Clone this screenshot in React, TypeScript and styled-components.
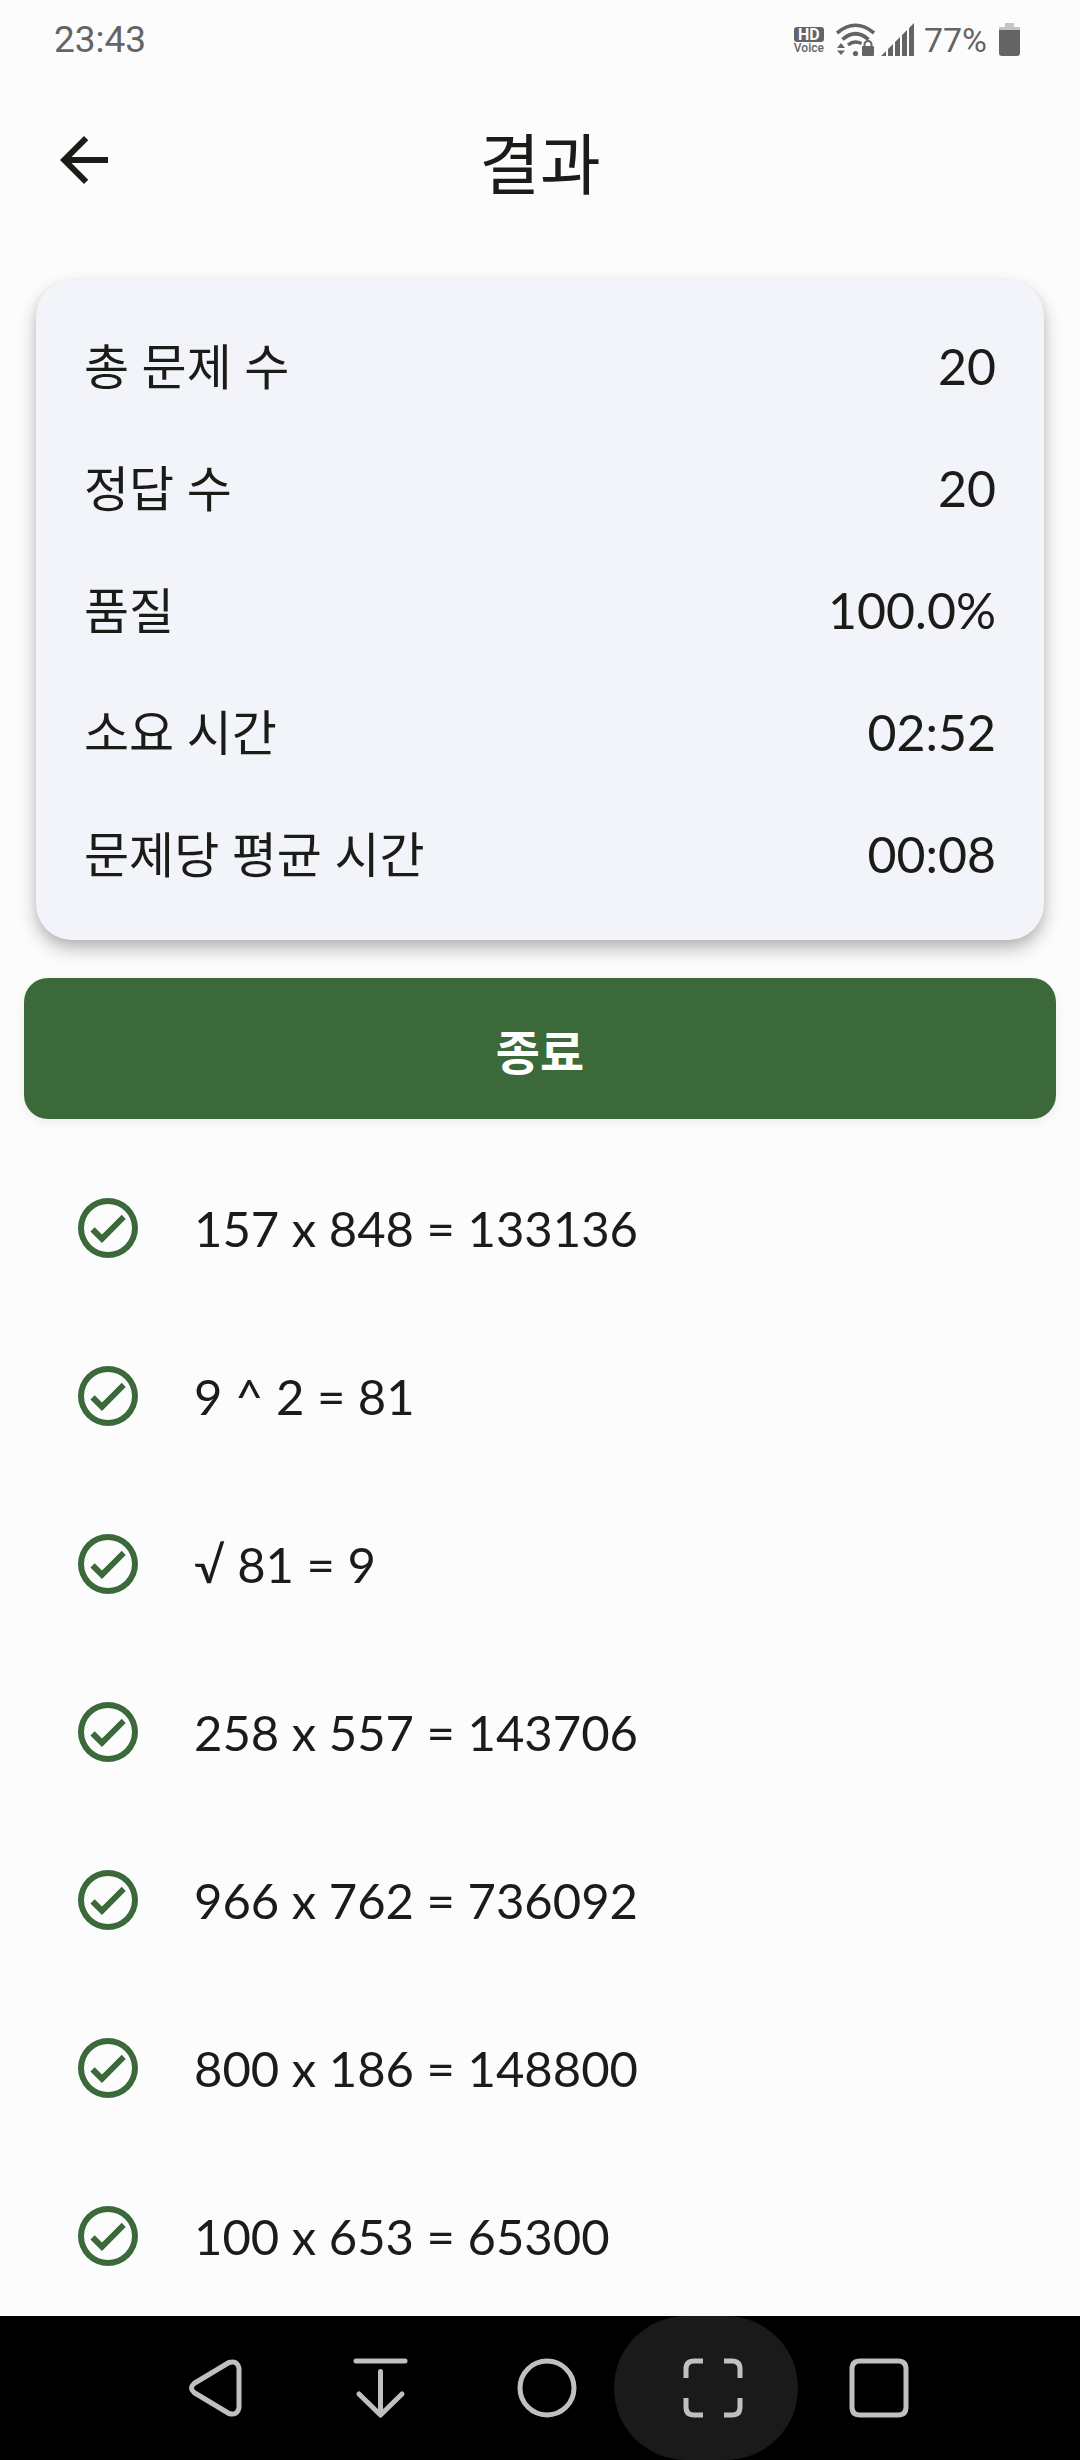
import React from 'react';
import styled, { createGlobalStyle } from 'styled-components';

const INK = '#1a1c18';
const GREEN = '#3b6939';
const STATUS = '#646464';
const NAV = '#c0c0c0';

const GlobalStyle = createGlobalStyle`
  *, *::before, *::after { box-sizing: border-box; }
  body {
    margin: 0;
    background: #fcfcfc;
    color: ${INK};
    font-family: Lato, "Noto Sans CJK KR", sans-serif;
  }
  button { font: inherit; border: 0; padding: 0; background: none; cursor: pointer; }
  svg { display: block; flex: none; }
`;

const Screen = styled.div`
  display: grid;
  grid-template-rows: auto auto minmax(0, 1fr) auto;
  height: 100vh;
`;

const StatusBar = styled.div`
  display: flex;
  justify-content: space-between;
  align-items: center;
  height: 80px;
  padding: 0 60px 0 54px;
  color: ${STATUS};
  font-family: Roboto, sans-serif;
`;

const Clock = styled.time`
  font-size: 37px;
  line-height: 40px;
`;

const StatusIcons = styled.div`
  display: flex;
  align-items: center;
`;

const VoiceBadge = styled.div`
  display: flex;
  flex-direction: column;
  align-items: center;
  width: 30px;
  margin-right: 12px;
  padding-top: 1px;
  font-size: 12px;
  font-weight: 500;
  line-height: 13px;
`;

const HdTag = styled.span`
  width: 30px;
  border-radius: 3px;
  background: ${STATUS};
  color: #fcfcfc;
  font-size: 16px;
  font-weight: 700;
  line-height: 15px;
  text-align: center;
`;

const Signals = styled.div`
  display: flex;
  gap: 5px;
`;

const BatteryText = styled.span`
  margin: 0 12px 0 9px;
  font-size: 34px;
  line-height: 40px;
`;

const TopBar = styled.header`
  display: grid;
  grid-template-columns: 72px 1fr 72px;
  align-items: center;
  height: 160px;
  padding: 0 48px;
`;

const IconButton = styled.button`
  width: 72px;
  height: 72px;
  color: ${INK};
`;

const Title = styled.h1`
  margin: 0;
  padding-top: 8px;
  font-size: 66px;
  font-weight: 400;
  line-height: 84px;
  text-align: center;
`;

const Content = styled.main`
  overflow-y: auto;
  scrollbar-width: none;
  padding-top: 40px;
`;

const Card = styled.dl`
  margin: 0 36px 38px;
  padding: 25px 48px;
  border-radius: 36px;
  background: #f3f4f9;
  box-shadow: 0 9px 18px rgba(0, 0, 0, 0.26), 0 3px 9px rgba(0, 0, 0, 0.06);
`;

const StatRow = styled.div`
  display: flex;
  justify-content: space-between;
  align-items: center;
  height: 122px;
  font-size: 49px;
  line-height: 72px;
`;

const StatLabel = styled.dt`
  margin: 0;
`;

const StatValue = styled.dd`
  margin: 0;
  font-size: 50px;
`;

const FinishWrap = styled.div`
  padding: 0 24px;
`;

const FinishButton = styled.button`
  && {
    display: block;
    width: 100%;
    height: 141px;
    padding-top: 6px;
    border-radius: 24px;
    background: ${GREEN};
    color: #fff;
    font-size: 48px;
    font-weight: 700;
    line-height: 72px;
    box-shadow: 0 4px 12px rgba(0, 0, 0, 0.06);
  }
`;

const ResultList = styled.ul`
  margin: 0;
  padding: 25px 72px 0;
  list-style: none;
`;

const ResultRow = styled.li`
  display: flex;
  align-items: center;
  gap: 50px;
  height: 168px;
  font-size: 49px;
  line-height: 72px;
`;

const NavBar = styled.nav`
  display: flex;
  justify-content: center;
  height: 144px;
  padding-left: 14px;
  background: #000;
  color: ${NAV};
`;

const NavButton = styled.button<{ $pressed?: boolean }>`
  position: relative;
  display: grid;
  place-items: center;
  width: 166px;
  height: 144px;
  color: inherit;

  &::before {
    content: '';
    display: ${(p) => (p.$pressed ? 'block' : 'none')};
    position: absolute;
    inset: 0 -2px 0 -16px;
    border-radius: 72px;
    background: #1a1a1a;
  }

  svg { position: relative; }
`;

const stats = [
  ['총 문제 수', '20'],
  ['정답 수', '20'],
  ['품질', '100.0%'],
  ['소요 시간', '02:52'],
  ['문제당 평균 시간', '00:08'],
];

const results = [
  '157 x 848 = 133136',
  '9 ^ 2 = 81',
  '√ 81 = 9',
  '258 x 557 = 143706',
  '966 x 762 = 736092',
  '800 x 186 = 148800',
  '100 x 653 = 65300',
];

const CheckIcon = () => (
  <svg width="72" height="72" viewBox="0 0 24 24" fill={GREEN} aria-label="정답" role="img">
    <path d="M12 2a10 10 0 1 0 0 20 10 10 0 0 0 0-20zm0 18a8 8 0 1 1 0-16 8 8 0 0 1 0 16z" />
    <path d="M16.59 7.58 10 14.17l-2.45-2.45L6.14 13.130 10 17l7.900-8z" />
  </svg>
);

const WifiIcon = () => (
  <svg width="40" height="34" viewBox="0 0 40 34" fill="none" stroke={STATUS}>
    <path d="M1 10Q19.500 -5.500 38 10" strokeWidth="3.600" />
    <path d="M6.500 16.500Q19.500 5 32.500 16.500" strokeWidth="3.600" />
    <path d="M12 22Q18 17 25.500 20.500" strokeWidth="3.400" />
    <circle cx="19.500" cy="30.500" r="2.600" fill={STATUS} stroke="none" />
    <path d="M5 20l4 5H1zM5 32l4-4.500H1z" fill={STATUS} stroke="none" />
    <rect x="26" y="23" width="12" height="10" rx="1" fill={STATUS} stroke="none" />
    <path d="M28.500 24v-2.500a3.500 3.500 0 0 1 7 0v2.500" strokeWidth="2" />
  </svg>
);

const SignalIcon = () => (
  <svg width="34" height="34" viewBox="0 0 34 34" fill={STATUS}>
    <path d="M0 33l5-5v5zM7 33v-7l5-5v12zM14 33V19l5-5v19zM21 33V12l5-5v26zM28 33V5l5-5v33z" />
  </svg>
);

const BatteryIcon = () => (
  <svg width="21" height="34" viewBox="0 0 21 34">
    <path d="M6 0h9v4h6v4H0V4h6z" fill="#c4c4c4" />
    <path d="M0 7h21v23a3 3 0 0 1-3 3H3a3 3 0 0 1-3-3z" fill={STATUS} />
  </svg>
);

const navIcons = [
  { label: '뒤로', d: 'M46 6.500 11 27.500Q6 32 11 36.500L46 57.500Q54 60 56 52V12Q54 4 46 6.500Z' },
  { label: '알림창', d: 'M7 5H56M31.500 15.500V58M10 38 31.500 59 53 38' },
  { label: '홈', d: 'M32 5a27 27 0 1 0 0 54 27 27 0 0 0 0-54Z' },
  { label: '화면 캡처', d: 'M22 5H13Q5 5 5 13V22M43 5H51Q59 5 59 13V22M5 42V51Q5 59 13 59H22M43 59H51Q59 59 59 51V42', pressed: true },
  { label: '최근 앱', d: 'M13 5H51Q59 5 59 13V51Q59 59 51 59H13Q5 59 5 51V13Q5 5 13 5Z' },
];

export default function App() {
  return (
    <Screen>
      <GlobalStyle />
      <StatusBar>
        <Clock>23:43</Clock>
        <StatusIcons>
          <VoiceBadge>
            <HdTag>HD</HdTag>
            <span>Voice</span>
          </VoiceBadge>
          <Signals>
            <WifiIcon />
            <SignalIcon />
          </Signals>
          <BatteryText>77%</BatteryText>
          <BatteryIcon />
        </StatusIcons>
      </StatusBar>
      <TopBar>
        <IconButton aria-label="뒤로">
          <svg width="72" height="72" viewBox="0 0 24 24" fill="currentColor">
            <path d="M20 11H7.830l5.590-5.590L12 4l-8 8 8 8 1.410-1.410L7.830 13H20z" />
          </svg>
        </IconButton>
        <Title>결과</Title>
      </TopBar>
      <Content>
        <Card>
          {stats.map(([label, value]) => (
            <StatRow key={label}>
              <StatLabel>{label}</StatLabel>
              <StatValue>{value}</StatValue>
            </StatRow>
          ))}
        </Card>
        <FinishWrap>
          <FinishButton>종료</FinishButton>
        </FinishWrap>
        <ResultList>
          {results.map((text) => (
            <ResultRow key={text}>
              <CheckIcon />
              <span>{text}</span>
            </ResultRow>
          ))}
        </ResultList>
      </Content>
      <NavBar>
        {navIcons.map(({ label, d, pressed }) => (
          <NavButton key={label} $pressed={pressed} aria-label={label}>
            <svg width="64" height="64" viewBox="0 0 64 64" fill="none" stroke="currentColor" strokeWidth="5" strokeLinecap={pressed ? 'butt' : 'round'} strokeLinejoin="round">
              <path d={d} />
            </svg>
          </NavButton>
        ))}
      </NavBar>
    </Screen>
  );
}
